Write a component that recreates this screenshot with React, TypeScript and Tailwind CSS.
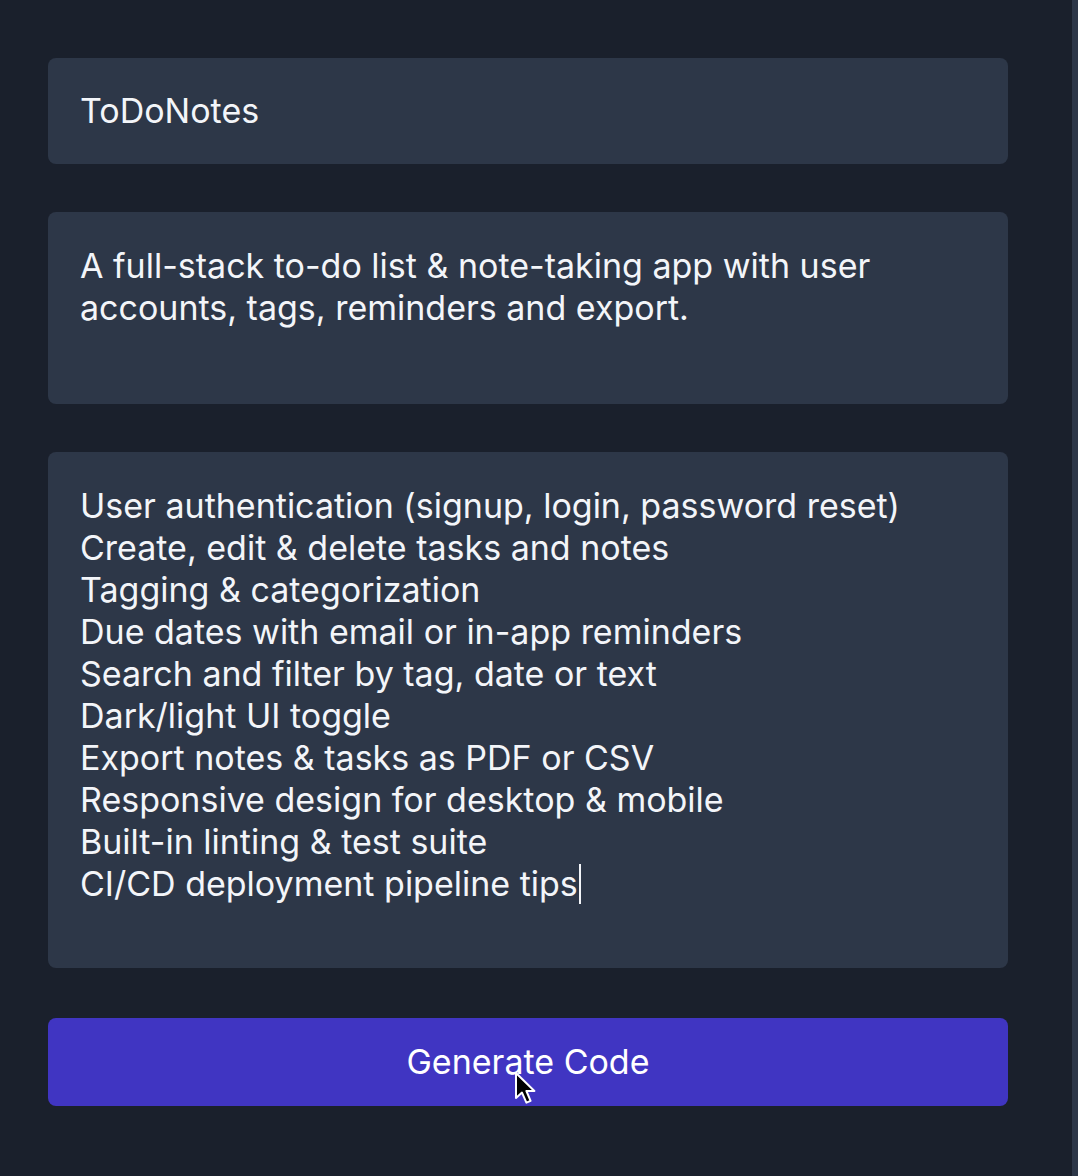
import React from "react";

const features = [
  "User authentication (signup, login, password reset)",
  "Create, edit & delete tasks and notes",
  "Tagging & categorization",
  "Due dates with email or in-app reminders",
  "Search and filter by tag, date or text",
  "Dark/light UI toggle",
  "Export notes & tasks as PDF or CSV",
  "Responsive design for desktop & mobile",
  "Built-in linting & test suite",
  "CI/CD deployment pipeline tips",
];

function Cursor() {
  return (
    <svg
      className="absolute left-[514px] top-[1071px] h-[34px] w-[24px]"
      viewBox="0 0 12 17"
    >
      <path
        d="M1 1 L1 13.5 L4 10.8 L6.2 15.8 L8.3 14.9 L6.2 10 L10.2 10 Z"
        fill="#000"
        stroke="#fff"
        strokeWidth="1"
        strokeLinejoin="round"
      />
    </svg>
  );
}

export default function App() {
  return (
    <div className="relative flex h-[1176px] w-full bg-[#1a202c] font-['Inter',sans-serif] text-[34px] leading-[42px] text-[#f3f5f9]">
      <main className="flex-1 pl-12 pr-[64px] pt-[58px]">
        <div className="flex flex-col gap-12">
          <div className="h-[106px] rounded-lg bg-[#2d3748] px-8 py-8">
            ToDoNotes
          </div>
          <div className="h-[192px] rounded-lg bg-[#2d3748] px-8 py-[33px]">
            A full-stack to-do list &amp; note-taking app with user
            <br />
            accounts, tags, reminders and export.
          </div>
          <div className="h-[516px] rounded-lg bg-[#2d3748] px-8 py-[33px]">
            {features.map((f, i) => (
              <div key={f} className="flex items-center">
                {f}
                {i === features.length - 1 && (
                  <span className="ml-px h-[40px] w-[2px] bg-[#f3f5f9]" />
                )}
              </div>
            ))}
          </div>
        </div>
        <button className="mt-[50px] flex h-[88px] w-full items-center justify-center rounded-lg bg-[#4035c2] text-white">
          Generate Code
        </button>
      </main>
      <div className="w-[6px] bg-[#2d3748]" />
      <Cursor />
    </div>
  );
}
